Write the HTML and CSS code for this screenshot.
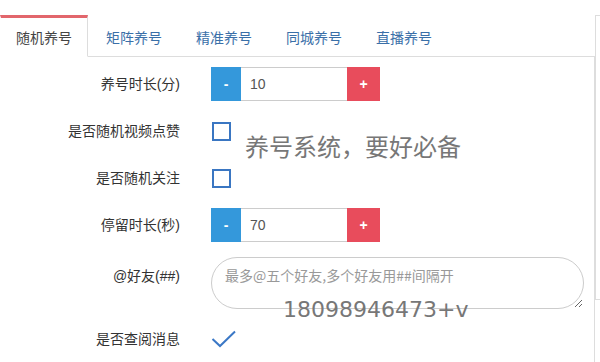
FILE: index.html
```html
<!DOCTYPE html>
<html lang="zh-CN">
<head>
<meta charset="utf-8">
<title>养号</title>
<link rel="stylesheet" href="styles.css">
</head>
<body>
<div class="page">
  <div class="main">
    <ul class="tabs">
      <li class="tab active"><a>随机养号</a></li>
      <li class="tab"><a>矩阵养号</a></li>
      <li class="tab"><a>精准养号</a></li>
      <li class="tab"><a>同城养号</a></li>
      <li class="tab"><a>直播养号</a></li>
    </ul>
    <div class="tab-content">
      <form class="form">
        <div class="row">
          <label class="label">养号时长(分)</label>
          <div class="spinner">
            <span class="btn btn-minus">-</span>
            <input class="num" type="text" value="10">
            <span class="btn btn-plus">+</span>
          </div>
        </div>
        <div class="row">
          <label class="label">是否随机视频点赞</label>
          <span class="check"></span>
        </div>
        <div class="row">
          <label class="label">是否随机关注</label>
          <span class="check"></span>
        </div>
        <div class="row">
          <label class="label">停留时长(秒)</label>
          <div class="spinner">
            <span class="btn btn-minus">-</span>
            <input class="num" type="text" value="70">
            <span class="btn btn-plus">+</span>
          </div>
        </div>
        <div class="row row-top">
          <label class="label label-top">@好友(##)</label>
          <textarea class="friends" placeholder="最多@五个好友,多个好友用##间隔开"></textarea>
        </div>
        <div class="row">
          <label class="label">是否查阅消息</label>
          <svg class="tick" width="26" height="18" viewBox="0 0 26 18"><polyline points="1.5,9 9,16 24,1.5" fill="none" stroke="#3b78c6" stroke-width="2"/></svg>
        </div>
      </form>
    </div>
  </div>
  <div class="side"></div>
  <div class="wm wm-title">养号系统，要好必备</div>
  <div class="wm wm-phone">18098946473+v</div>
</div>
</body>
</html>
```

FILE: styles.css
```css
html, body {
  margin: 0;
  padding: 0;
  background: #fff;
}
body {
  font-family: "Liberation Sans", "Noto Sans CJK SC", sans-serif;
  font-size: 14px;
  color: #333;
}
.page {
  position: relative;
  display: flex;
  padding-top: 15px;
  height: 347px;
  overflow: hidden;
}
.main {
  width: 595px;
  flex: none;
  display: flex;
  flex-direction: column;
}
.tabs {
  list-style: none;
  margin: 0;
  padding: 0;
  display: flex;
  border-bottom: 1px solid #ddd;
}
.tab {
  margin-right: 2px;
  margin-bottom: -1px;
}
.tab a {
  display: block;
  padding: 9px 15px;
  line-height: 20px;
  border: 1px solid transparent;
  border-top: 3px solid transparent;
  color: #3a6fa8;
  font-family: "Noto Sans CJK SC", sans-serif;
}
.tab.active a {
  color: #444;
  background: #fff;
  border-top-color: #e2666c;
  border-right-color: #ddd;
  border-bottom-color: #fff;
}
.tab-content {
  flex: 1;
  border-right: 1px solid #ddd;
  padding-top: 10px;
}
.form {
  display: flex;
  flex-direction: column;
  gap: 13px;
}
.row {
  display: grid;
  grid-template-columns: 180px 1fr;
  column-gap: 31px;
  align-items: center;
  min-height: 34px;
}
.row-top {
  align-items: start;
  margin-top: 2px;
}
.label {
  text-align: right;
  line-height: 20px;
  color: #333;
}
.label-top {
  padding-top: 9px;
}
.spinner {
  display: flex;
  height: 34px;
  width: 169px;
}
.btn {
  display: flex;
  align-items: center;
  justify-content: center;
  color: #fff;
  font-size: 14px;
  font-weight: bold;
}
.btn-minus {
  width: 30px;
  background: #3498db;
}
.btn-plus {
  width: 33px;
  background: #e84c5c;
}
.num {
  width: 106px;
  box-sizing: border-box;
  height: 34px;
  margin: 0;
  border: 1px solid #ccc;
  border-left: none;
  border-right: none;
  padding: 0 0 0 9px;
  font-family: "Liberation Sans", sans-serif;
  font-size: 14px;
  color: #555;
  outline: none;
}
.check {
  display: block;
  width: 19px;
  height: 19px;
  box-sizing: border-box;
  border: 2px solid #3a76c2;
  margin-left: 1px;
}
.tick {
  display: block;
  margin-left: 0;
}
.friends {
  display: block;
  width: 373px;
  height: 52px;
  box-sizing: border-box;
  margin: 0;
  border: 1px solid #ccc;
  border-radius: 26px;
  padding: 7px 13px;
  font-family: "Noto Sans CJK SC", sans-serif;
  font-size: 14px;
  line-height: 20px;
  color: #555;
  outline: none;
}
.friends::placeholder {
  color: #999;
}
.side {
  flex: 1;
  height: 285px;
  box-sizing: border-box;
  border-top: 1px solid #ddd;
  border-left: 1px solid #ddd;
  border-bottom: 1px solid #ddd;
}
.wm {
  position: absolute;
  color: #777;
  white-space: nowrap;
  pointer-events: none;
}
.wm-title {
  left: 245px;
  top: 134px;
  font-family: "Noto Sans CJK SC", sans-serif;
  font-size: 24px;
  line-height: 24px;
}
.wm-phone {
  left: 283px;
  top: 299px;
  font-family: "DejaVu Sans", sans-serif;
  font-size: 22px;
  line-height: 22px;
}
```
